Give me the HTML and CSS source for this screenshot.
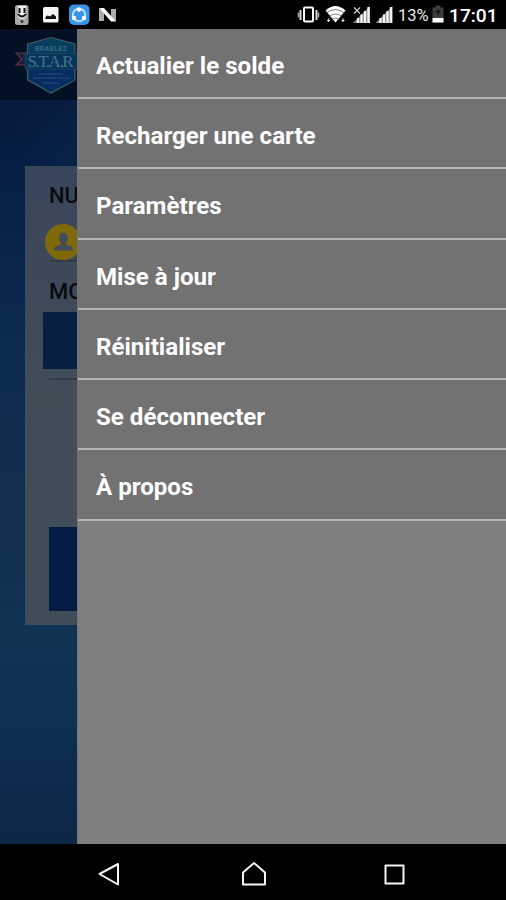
FILE: index.html
```html
<!DOCTYPE html>
<html lang="fr">
<head>
<meta charset="utf-8">
<title>Menu</title>
<link rel="stylesheet" href="styles.css">
</head>
<body>
<div class="phone">
  <header class="status">
    <svg class="status-left" width="130" height="29" viewBox="0 0 130 29">
      <rect x="15" y="5" width="13.5" height="20" rx="2.5" fill="#a8a8a8"/>
      <path d="M18 6h8v11q-4 4-8 0z" fill="#eee"/>
      <path d="M19.5 8v5M24.5 8v5M18 14q4 5 8 0" fill="none" stroke="#111" stroke-width="2"/>
      <circle cx="22" cy="21.500" r="1.500" fill="#333"/>
      <rect x="43" y="7" width="15.500" height="15.500" rx="1.500" fill="#f4f4f4"/>
      <path d="M45.500 19v-2l2-1.500 2.500 1 3-2.500 3 2.500V19z" fill="#111"/>
      <rect x="69" y="4.500" width="20.500" height="20.500" rx="5" fill="#3794e8"/>
      <circle cx="79" cy="15" r="6.300" fill="none" stroke="#c9e7ff" stroke-width="1.700"/>
      <g fill="#fff"><circle cx="79" cy="9.500" r="2.200"/><circle cx="74" cy="18" r="2.200"/><circle cx="84" cy="18" r="2.200"/></g>
      <path d="M99 9v12h5V9zM111 9v12h5V9z" fill="#aaa"/>
      <path d="M99 8h5l12 13.500h-5z" fill="#f4f4f4"/>
    </svg>
    <div class="status-right">
      <svg width="106" height="29" viewBox="0 0 106 29">
        <rect x="14" y="7.500" width="9" height="14" rx="1" fill="none" stroke="#fff" stroke-width="2"/>
        <path d="M10.500 10v10M26.500 10v10" stroke="#ddd" stroke-width="2"/>
        <path d="M8.500 12.500v5M28.500 12.500v5" stroke="#aaa" stroke-width="1.500"/>
        <path d="M45.500 22.500L35.500 10.500Q45.500 1.500 55.500 10.500z" fill="#fff"/>
        <path d="M36.500 13q9-7 18 0M39 16.500q6.500-5 13 0M41.500 19.500q4-3 8 0" fill="none" stroke="#555" stroke-width=".8"/>
        <path d="M37 20.500h3M38.500 18.500v3.500M51.500 20.500h3M53 18.500v3.500" stroke="#ddd" stroke-width="1.200"/>
        <path d="M63 23L80 6v17z" fill="#888"/>
        <path d="M68 23v-5M71.500 23V14.500M75 23V11M78.500 23V7" stroke="#f4f4f4" stroke-width="2.300"/>
        <path d="M64 7.500l6 6M70 7.500l-6 6" stroke="#ccc" stroke-width="1.300"/>
        <path d="M85.500 23L102.500 6v17z" fill="#888"/>
        <path d="M90.500 23v-5M94 23V14.500M97.500 23V11M101 23V7" stroke="#f4f4f4" stroke-width="2.300"/>
      </svg>
      <span class="percent">13%</span>
      <svg class="battery" width="12" height="29" viewBox="0 0 12 29"><path d="M3.500 5.500h5v2h3v15h-11v-15h3z" fill="#3d3d3d"/><path d="M6 9.500v6M3.500 11.500h5" stroke="#111" stroke-width="1.300"/><path d="M.5 18h11v4.500H.5z" fill="#fff"/></svg>
      <span class="clock">17:01</span>
    </div>
  </header>

  <main class="screen">
    <section class="backdrop">
      <div class="appbar">
        <svg width="77" height="71" viewBox="0 0 77 71">
          <path d="M16 24h11v12H16l6-6z" fill="#172137" stroke="#67303c" stroke-width="1.200"/>
          <path d="M27.500 15L51 8.500 75 15v36L51 64 27.500 51z" fill="#063c5c" stroke="#465a69" stroke-width="1.200"/>
          <path d="M29 39h45v12L51 62.500 29 50z" fill="#062d61"/>
          <path d="M25 24.500h53V40H25z" fill="#06375a" stroke="#24465f" stroke-width=".7"/>
          <text class="logo-small" x="35" y="21.500" textLength="32">BRABLEZ</text>
          <text class="logo-main" x="27.500" y="38" textLength="46">S.T.A.R</text>
          <path d="M39 45h24M33 49h37M43 54h16" stroke="#365b78" stroke-width="1" stroke-dasharray="2 .7"/>
        </svg>
      </div>
      <div class="card">
        <div class="label">NU</div>
        <div class="field">
          <svg width="36" height="36" viewBox="0 0 36 36"><circle cx="18" cy="18" r="18" fill="#80690b"/><ellipse cx="18.500" cy="14" rx="4.500" ry="5.500" fill="#424d58"/><path d="M16 17h5v3.500l5.500 2q1.500 1 1.500 4H9q0-3 1.500-4l5.500-2z" fill="#424d58"/></svg>
        </div>
        <div class="label second">MO</div>
        <div class="amount"></div>
        <div class="rule"></div>
        <div class="submit"></div>
      </div>
    </section>
    <nav class="drawer">
      <ul class="menu">
        <li>Actualier le solde</li>
        <li>Recharger une carte</li>
        <li>Paramètres</li>
        <li>Mise à jour</li>
        <li>Réinitialiser</li>
        <li>Se déconnecter</li>
        <li>À propos</li>
      </ul>
    </nav>
  </main>

  <footer class="navbar">
    <svg width="506" height="56" viewBox="0 0 506 56" fill="none" stroke="#f4f4f4" stroke-width="2" stroke-linejoin="round">
      <path d="M99.500 30L118 20v20.500z"/>
      <path d="M243 40.500V28.500L254 19l11 9.500v12z"/>
      <rect x="385.500" y="21.500" width="18" height="18"/>
    </svg>
  </footer>
</div>
</body>
</html>
```
FILE: styles.css
```css
* { box-sizing: border-box; }
body { margin: 0; background: #000; font-family: Roboto, "Liberation Sans", sans-serif; }
.phone { width: 506px; height: 900px; display: flex; flex-direction: column; overflow: hidden; background: #000; }
.status { height: 29px; display: flex; justify-content: space-between; flex: none; color: #fff; }
.status svg { display: block; flex: none; }
.status-right { display: flex; width: 216px; line-height: 31px; white-space: nowrap; }
.percent { width: 33px; padding-left: 2px; font-size: 16.5px; color: #e8e8e8; }
.battery { margin-left: 3px; }
.clock { margin-left: 5px; font-size: 19.2px; font-weight: 500; }
.screen { height: 815px; display: flex; flex: none; }
.backdrop { width: 77px; flex: none; overflow: hidden; background: linear-gradient(75deg, transparent 70%, rgba(10, 58, 94, .25)), linear-gradient(#07183b 71px, #071e44 130px, #0b2b50 310px, #12304f 480px, #103354 620px, #0e2d52 720px, #0c2748); }
.appbar { height: 71px; background: #041124; }
.appbar svg { display: block; }
.logo-small { font-size: 7px; font-weight: 700; fill: #326b85; }
.logo-main { font-family: "Liberation Serif", serif; font-size: 17px; fill: #45708a; }
.card { height: 459px; margin: 66px 0 0 24.5px; padding: 18px 0 0 24.5px; background: linear-gradient(#39465a, #424d58 50%, #414d59); }
.label { height: 24px; line-height: 24px; font-size: 22px; font-weight: 500; color: #080b10; overflow: hidden; }
.field { height: 54px; padding-top: 16px; border-bottom: 2px solid #333c46; }
.field svg { display: block; margin-left: -4px; }
.second { margin-top: 18px; }
.amount { height: 57px; margin: 8px 0 0 -6px; background: #071f43; }
.rule { height: 2px; margin-top: 9px; background: #333c46; }
.submit { height: 84px; margin-top: 147px; background: #051d44; }
.drawer { flex: 1; background: #7f7f7f; border-left: 1px solid #747474; }
.menu { list-style: none; margin: 0; padding: 0; }
.menu li { height: 70.3px; padding: 2px 18px 0; line-height: 70px; font-size: 24.1px; font-weight: 700; color: #fff; background: #727272; border-bottom: 2px solid #b4b4b4; }
.menu li:first-child { height: 70px; }
.navbar { height: 56px; background: #000; }
.navbar svg { display: block; }
```
